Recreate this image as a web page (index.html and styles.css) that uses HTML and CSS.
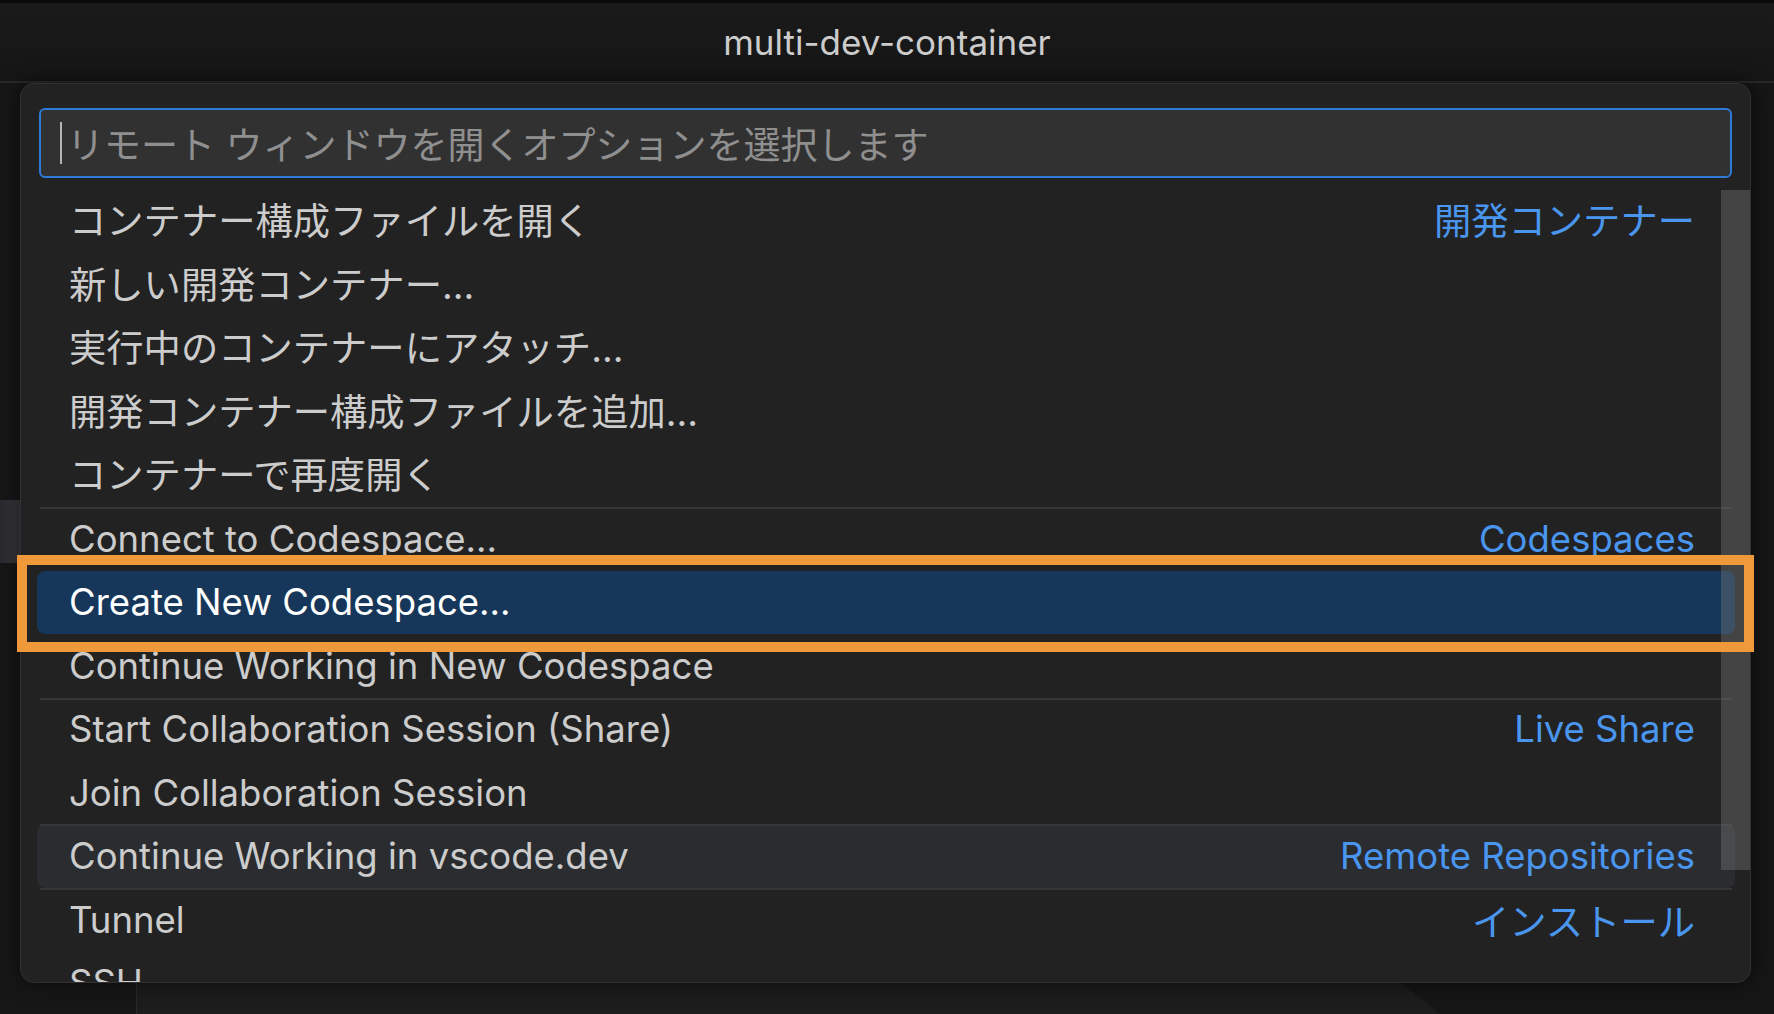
FILE: index.html
```html
<!DOCTYPE html>
<html lang="ja">
<head>
  <meta charset="UTF-8">
  <title>multi-dev-container</title>
  <link rel="stylesheet" href="styles.css">
</head>
<body>

  <header class="titlebar">multi-dev-container</header>

  <div class="workbench">
    <nav class="sidebar">
      <div class="sidebar-item"></div>
    </nav>
    <main class="editor"></main>
  </div>

  <!-- remote window quick pick -->
  <section class="quick-input">
    <div class="input-box">
      <span class="caret"></span>
      <span class="placeholder">リモート ウィンドウを開くオプションを選択します</span>
    </div>

    <ul class="list">
      <li class="row ja"><span class="label">コンテナー構成ファイルを開く</span><span class="desc">開発コンテナー</span></li>
      <li class="row ja"><span class="label">新しい開発コンテナー...</span></li>
      <li class="row ja"><span class="label">実行中のコンテナーにアタッチ...</span></li>
      <li class="row ja"><span class="label">開発コンテナー構成ファイルを追加...</span></li>
      <li class="row ja"><span class="label">コンテナーで再度開く</span></li>
      <li class="row group"><span class="label">Connect to Codespace...</span><span class="desc">Codespaces</span></li>
      <li class="row selected"><span class="label">Create New Codespace...</span></li>
      <li class="row"><span class="label">Continue Working in New Codespace</span></li>
      <li class="row group"><span class="label">Start Collaboration Session (Share)</span><span class="desc">Live Share</span></li>
      <li class="row"><span class="label">Join Collaboration Session</span></li>
      <li class="row group hover"><span class="label">Continue Working in vscode.dev</span><span class="desc">Remote Repositories</span></li>
      <li class="row group"><span class="label">Tunnel</span><span class="desc ja-text">インストール</span></li>
      <li class="row"><span class="label">SSH</span></li>
    </ul>

    <div class="scrollbar"></div>
  </section>

  <div class="highlight-frame"></div>

</body>
</html>
```

FILE: styles.css
```css
* {
  box-sizing: border-box;
}
html, body {
  margin: 0;
  padding: 0;
}
body {
  position: relative;
  height: 1014px;
  overflow: hidden;
  background: #1b1b1b;
  font-family: Inter, "Noto Sans CJK JP", sans-serif;
  color: #cccccc;
}

.titlebar {
  height: 83px;
  border-top: 3px solid #0b0b0b;
  border-bottom: 2px solid #2a2a2a;
  background: linear-gradient(#1a1a1a, #161616);
  display: flex;
  align-items: center;
  justify-content: center;
  font-size: 35px;
  color: #cccccc;
}

.workbench {
  display: flex;
  height: 931px;
}
.sidebar {
  width: 137px;
  background: #171717;
  border-right: 1px solid #2b2b2b;
  padding-top: 417px;
}
.sidebar-item {
  height: 63px;
  background: linear-gradient(90deg, #2a2a2e, #3c3c41 20px);
}
.editor {
  flex: 1;
  background: linear-gradient(37.6deg, #1d1d1d 45.8%, #161616 45.8%);
}

.quick-input {
  position: absolute;
  left: 20px;
  top: 83px;
  width: 1731px;
  height: 900px;
  padding: 24px 18px 0;
  background: #222222;
  border: 1px solid #313131;
  border-radius: 14px;
  overflow: hidden;
  box-shadow: 0 0 24px rgba(0, 0, 0, 0.6);
}

.input-box {
  height: 70px;
  display: flex;
  align-items: center;
  gap: 5px;
  padding-left: 19px;
  background: #313131;
  border: 2px solid #2f7ad6;
  border-radius: 6px;
}
.caret {
  width: 2px;
  height: 42px;
  background: #b4b4b4;
}
.placeholder {
  font-size: 37px;
  color: #8f8f8f;
}

.list {
  list-style: none;
  margin: 12px -3px 0 -2px;
  padding: 0;
}
.row {
  position: relative;
  height: 63.45px;
  display: flex;
  align-items: center;
  justify-content: space-between;
  padding: 0 40px 0 32px;
  border-radius: 8px;
  font-size: 36.5px;
  white-space: nowrap;
}
.row.ja {
  padding-bottom: 5px;
  font-size: 37.3px;
}
.row .ja-text {
  font-size: 37.3px;
}
.row.group::before {
  content: "";
  position: absolute;
  left: 3px;
  right: 3px;
  top: 0;
  height: 2px;
  background: #353535;
}
.row .desc {
  color: #4a96ef;
}
.row.selected {
  background: #17375a;
  color: #ffffff;
}
.row.hover {
  background: #2a2c2f;
}

.scrollbar {
  position: absolute;
  top: 106px;
  right: 0;
  width: 29px;
  height: 680px;
  background: rgba(121, 121, 121, 0.4);
}

.highlight-frame {
  position: absolute;
  left: 17px;
  top: 555px;
  width: 1737px;
  height: 97px;
  border: 10px solid #f0993a;
}
```
